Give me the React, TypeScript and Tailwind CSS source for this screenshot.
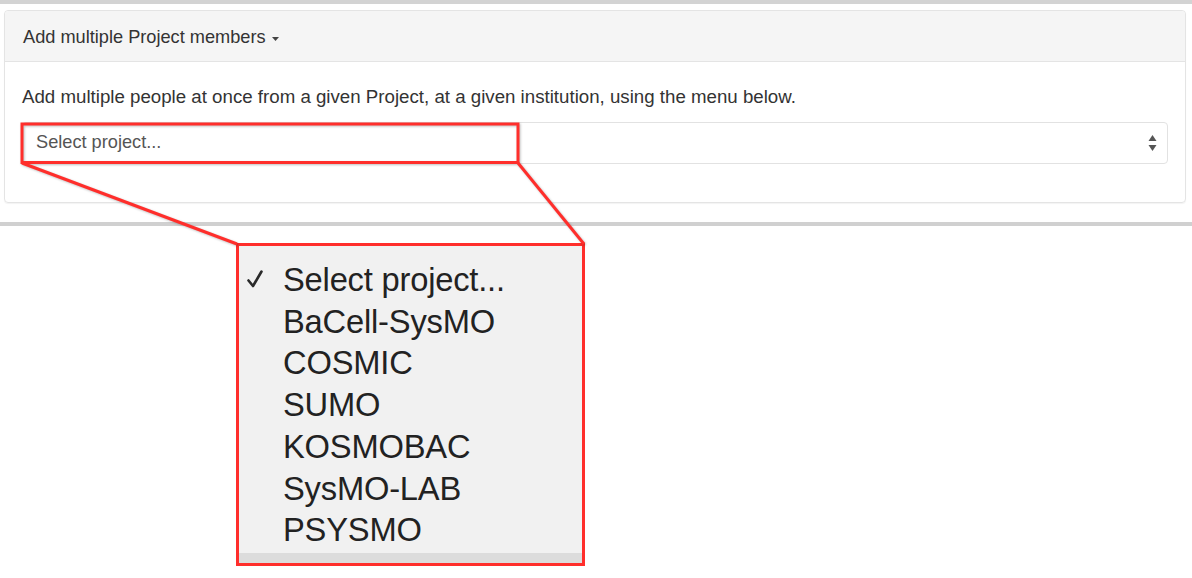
const projects = ["BaCell-SysMO", "COSMIC", "SUMO", "KOSMOBAC", "SysMO-LAB", "PSYSMO"];

function Caret() {
  return (
    <svg width="7" height="4" viewBox="0 0 7 4" className="ml-[6px] mt-[2px]">
      <path d="M0 0h7L3.5 4z" fill="#444" />
    </svg>
  );
}

function SelectArrows() {
  return (
    <svg width="9" height="16" viewBox="0 0 9 16">
      <path d="M4.5 0L8.5 6H0.5z" fill="#555" />
      <path d="M0.5 10h8L4.5 16z" fill="#555" />
    </svg>
  );
}

function Check() {
  return (
    <svg width="16" height="18" viewBox="0 0 16 18" className="absolute left-[8px] top-[11px]">
      <path d="M1.5 10.5L6 16L14.5 1.5" fill="none" stroke="#2a2a2a" strokeWidth="2.6" strokeLinecap="round" strokeLinejoin="round" />
    </svg>
  );
}

export default function App() {
  return (
    <div className="relative w-[1192px] h-[578px] overflow-hidden bg-white font-[Liberation_Sans,Arial,sans-serif]">
      <div className="h-[4px] bg-[#d3d3d3]" />

      {/* panel */}
      <div className="ml-[4px] mt-[6px] w-[1182px] rounded-[4px] border border-[#e4e4e4] shadow-[0_1px_1px_rgba(0,0,0,0.05)]">
        <div className="flex h-[51px] items-center rounded-t-[4px] border-b border-[#e4e4e4] bg-[#f5f5f5] px-[18px] pt-[3px] text-[18.2px] text-[#333]">
          Add multiple Project members
          <Caret />
        </div>
        <div className="px-[17px] pt-[22px] pb-[38px]">
          <p className="text-[18.7px] leading-[26px] text-[#333]">
            Add multiple people at once from a given Project, at a given institution, using the menu below.
          </p>
          <div className="mt-[12px] flex h-[42px] items-center justify-between rounded-[4px] border border-[#e2e2e2] pl-[13px] pr-[10px]">
            <span className="text-[18.2px] text-[#555]">Select project...</span>
            <SelectArrows />
          </div>
        </div>
      </div>

      <div className="mt-[19px] h-[4px] bg-[#d0d0d0]" />

      {/* opened menu */}
      <div className="ml-[236px] mt-[17px] flex h-[323px] w-[349px] flex-col border-[3px] border-[#ff2e2b] bg-[#f1f1f1]">
        <div className="flex-1 pt-[13px] text-[32.7px] leading-[41.7px] tracking-[-0.2px] text-[#222]">
          <div className="relative pl-[44px]">
            <Check />
            Select project...
          </div>
          {projects.map((p) => (
            <div key={p} className="pl-[44px]">
              {p}
            </div>
          ))}
        </div>
        <div className="h-[10px] bg-[#dcdcdc]" />
      </div>

      {/* callout annotation */}
      <svg
        width="1192"
        height="578"
        className="pointer-events-none absolute left-0 top-0 drop-shadow-[1px_1px_1px_rgba(0,0,0,0.25)]"
      >
        <rect x="22" y="124" width="496" height="38.5" fill="none" stroke="#ff2e2b" strokeWidth="3" />
        <line x1="22" y1="163" x2="237" y2="244" stroke="#ff2e2b" strokeWidth="3" />
        <line x1="518" y1="163" x2="584" y2="244" stroke="#ff2e2b" strokeWidth="3" />
      </svg>
    </div>
  );
}
